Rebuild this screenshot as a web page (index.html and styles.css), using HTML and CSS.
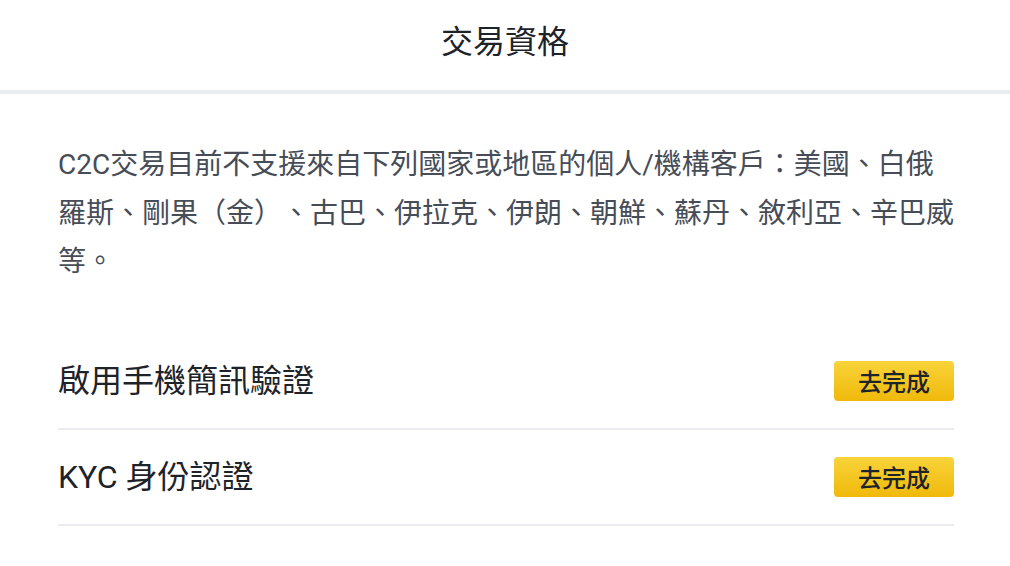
FILE: index.html
```html
<!DOCTYPE html>
<html>

<head lang="zh-Hant">
    <meta charset="UTF-8">
    <title>交易資格</title>
    <link rel="stylesheet" href="styles.css">
</head>

<body>
    <div class="header">
        <h1 class="header_title">交易資格</h1>
    </div>

    <div class="content">
        <p class="notice">C2C交易目前不支援來自下列國家或地區的個人/機構客戶：美國、白俄羅斯、剛果（金）、古巴、伊拉克、伊朗、朝鮮、蘇丹、敘利亞、辛巴威等。</p>

        <ul class="task_list">
            <li class="task">
                <span class="task_name">啟用手機簡訊驗證</span>
                <a class="task_btn" href="javascript:">去完成</a>
            </li>
            <li class="task">
                <span class="task_name">KYC 身份認證</span>
                <a class="task_btn" href="javascript:">去完成</a>
            </li>
        </ul>
    </div>
</body>

</html>
```

FILE: styles.css
```css
* {
    margin: 0;
    padding: 0;
}

li {
    list-style: none;
}

body {
    background-color: #fff;
    font-family: Roboto, "Noto Sans CJK TC", sans-serif;
    color: #1e2329;
}

.header {
    height: 90px;
    border-bottom: 4px solid #eaecef;
    display: flex;
    align-items: center;
    justify-content: center;
}

.header_title {
    font-size: 32px;
    font-weight: 400;
    line-height: 1;
    margin-top: -6px;
}

.content {
    padding: 47px 56px 0 58px;
}

.notice {
    font-size: 28px;
    line-height: 48.5px;
    color: #474d57;
    text-spacing-trim: space-all;
}

.task_list {
    margin-top: 47px;
}

.task {
    height: 94px;
    border-bottom: 2px solid #eaecef;
    display: flex;
    align-items: center;
    justify-content: space-between;
}

.task_name {
    font-size: 32px;
    line-height: 1;
}

.task_btn {
    display: flex;
    align-items: center;
    justify-content: center;
    width: 120px;
    height: 40px;
    border-radius: 4px;
    background-image: linear-gradient(180deg, #f8d33a 0%, #f0b90b 100%);
    color: #1e2329;
    font-size: 24px;
    font-weight: 500;
    text-decoration: none;
}
```
